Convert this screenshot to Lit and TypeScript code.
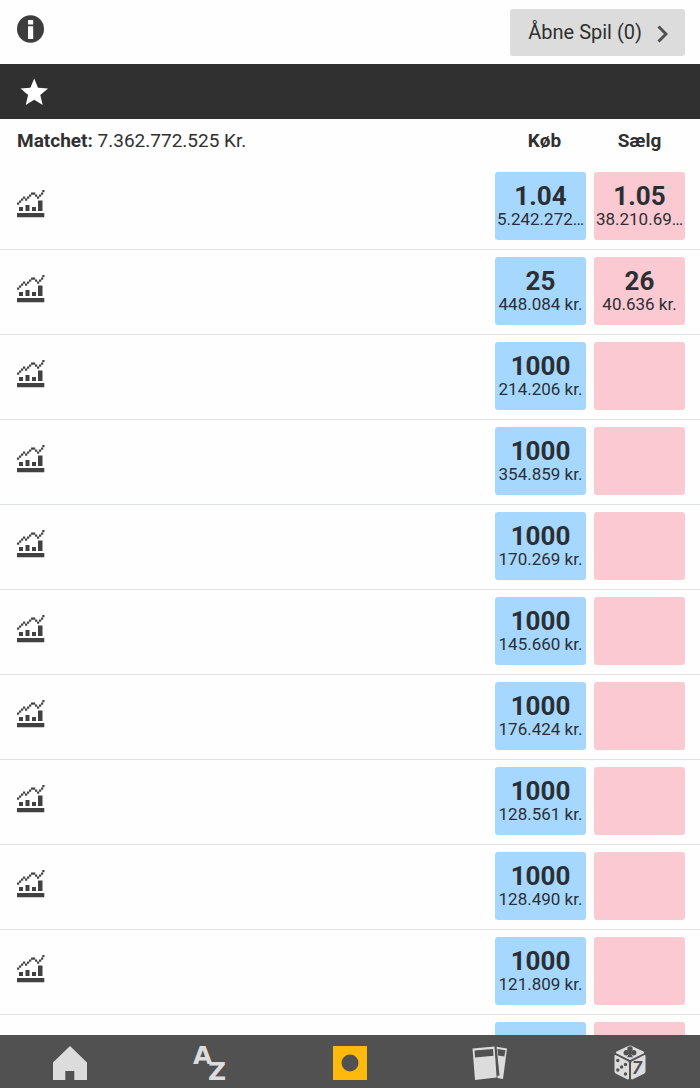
import { LitElement, html, css, svg, nothing } from "lit";
import { customElement, property } from "lit/decorators.js";

interface Offer {
  price: string;
  stake: string;
}

interface Runner {
  back: Offer;
  lay: Offer | null;
}

const only = (stake: string): Runner => ({ back: { price: "1000", stake }, lay: null });

const RUNNERS: Runner[] = [
  { back: { price: "1.04", stake: "5.242.272…" }, lay: { price: "1.05", stake: "38.210.69…" } },
  { back: { price: "25", stake: "448.084 kr." }, lay: { price: "26", stake: "40.636 kr." } },
  only("214.206 kr."),
  only("354.859 kr."),
  only("170.269 kr."),
  only("145.660 kr."),
  only("176.424 kr."),
  only("128.561 kr."),
  only("128.490 kr."),
  only("121.809 kr."),
  { back: { price: "", stake: "" }, lay: null },
];

const DOTS: [number, number][] = [
  [0, 13], [2, 11], [4, 9], [6, 7], [8, 9], [10, 7], [12, 5], [14, 3], [16, 3], [18, 5], [20, 7], [22, 5], [24, 3], [25.3, 0.5],
];

@customElement("odds-button")
export class OddsButton extends LitElement {
  @property() kind: "back" | "lay" = "back";
  @property({ attribute: false }) offer: Offer | null = null;

  static styles = css`
    :host { display: block; min-width: 0; }
    button {
      display: flex;
      flex-direction: column;
      align-items: center;
      width: 100%;
      height: 68px;
      padding: 9px 0 0;
      border: 0;
      border-radius: 3px;
      font-family: Roboto, sans-serif;
      color: #2b2f33;
      cursor: pointer;
    }
    .back { background: #a6d8ff; }
    .lay { background: #fac9d1; }
    .price { font-size: 26px; line-height: 30px; font-weight: 700; }
    .stake { font-size: 17px; line-height: 16px; white-space: nowrap; }
  `;

  render() {
    return html`<button class=${this.kind} aria-label=${this.offer?.price ? nothing : this.kind === "back" ? "Køb" : "Sælg"}>
      ${this.offer
        ? html`<span class="price">${this.offer.price}</span><span class="stake">${this.offer.stake}</span>`
        : nothing}
    </button>`;
  }
}

@customElement("app-root")
export class AppRoot extends LitElement {
  static styles = css`
    :host {
      display: flex;
      flex-direction: column;
      height: 100vh;
      background: #fefefe;
      color: #303030;
      font-family: Roboto, sans-serif;
    }
    * { box-sizing: border-box; }
    svg { display: block; }
    button { border: 0; padding: 0; background: none; font: inherit; color: inherit; cursor: pointer; }
    .top {
      display: flex;
      align-items: center;
      justify-content: space-between;
      flex: none;
      height: 64px;
      padding: 0 15px 0 17px;
    }
    .info { padding-bottom: 6px; }
    .top .open {
      display: flex;
      align-items: center;
      gap: 15px;
      height: 47px;
      padding: 0 17px 0 18px;
      border-radius: 3px;
      background: #dcdcdc;
      font-size: 20px;
      line-height: 24px;
    }
    .open svg { margin-top: 4px; }
    .favourite {
      display: flex;
      align-items: center;
      flex: none;
      height: 55px;
      padding-left: 20px;
      background: #303030;
      color: #fff;
    }
    main { flex: 1; min-height: 0; overflow-y: auto; scrollbar-width: none; }
    .grid {
      display: grid;
      grid-template-columns: 1fr 91px 91px;
      column-gap: 8px;
      padding: 0 15px 0 17px;
    }
    .grid.heading { height: 46px; padding-bottom: 2px; align-items: center; font-size: 19px; line-height: 22px; }
    .heading b { font-weight: 700; }
    .heading .col { text-align: center; font-weight: 700; }
    .heading .back-col { padding-left: 8px; }
    .grid.runner { height: 85px; padding-top: 7px; border-bottom: 1px solid #dfe3e3; align-items: start; }
    .runner .stats { justify-self: start; padding-top: 17px; color: #414141; }
    nav {
      display: grid;
      grid-template-columns: repeat(5, 1fr);
      flex: none;
      height: 53px;
      background: #515151;
      color: #dcdcdc;
    }
    nav a { display: flex; align-items: center; justify-content: center; color: inherit; text-decoration: none; padding-top: 2px; }
    .az { font: 700 25px "DejaVu Sans", sans-serif; }
    .seven { font: italic 700 18px Roboto, sans-serif; }
  `;

  private chart() {
    return html`<svg width="28" height="29" viewBox="0 0 28 29" fill="currentColor" aria-hidden="true">
      ${DOTS.map(([x, y]) => svg`<rect x=${x} y=${y + 0.5} width="2.2" height="2.2" />`)}
      <path d="M2 18h4v4H2zM8.500 16h4v6h-4zM15 18h4v4h-4zM21 11.500h4.500V22H21zM0 24h27.300v4.200H0z" />
    </svg>`;
  }

  private row(r: Runner) {
    return html`<div class="grid runner">
      <button class="stats" aria-label="Statistik">${this.chart()}</button>
      <odds-button kind="back" .offer=${r.back}></odds-button>
      <odds-button kind="lay" .offer=${r.lay}></odds-button>
    </div>`;
  }

  render() {
    return html`
      <header class="top">
        <button class="info" aria-label="Information">
          <svg width="27" height="28" viewBox="0 0 27 28">
            <ellipse cx="13.500" cy="14" rx="13.500" ry="13.800" fill="#3d3d3d" />
            <path d="M11 5h5.200v4.500H11zM11 11.300h5.200V24H11z" fill="#fff" />
          </svg>
        </button>
        <button class="open">
          <span>Åbne Spil (0)</span>
          <svg width="11" height="18" viewBox="0 0 11 18" fill="none" stroke="#505050" stroke-width="3">
            <path d="M1.500 1.500 9 9 1.500 16.500" />
          </svg>
        </button>
      </header>
      <div class="favourite">
        <button aria-label="Favorit">
          <svg width="28" height="28" viewBox="0 0 28 28" fill="currentColor">
            <path d="M14.200 0.500 18 9.800 28 10.600 20.300 17 22.700 27 14.200 21.700 5.700 27 8.100 17 0.500 10.600 10.400 9.800z" />
          </svg>
        </button>
      </div>
      <main>
        <div class="grid heading">
          <span><b>Matchet:</b> 7.362.772.525 Kr.</span>
          <span class="col back-col">Køb</span>
          <span class="col">Sælg</span>
        </div>
        ${RUNNERS.map((r) => this.row(r))}
      </main>
      <nav aria-label="Hovedmenu">
        <a href="#hjem" aria-label="Hjem">
          <svg width="34" height="34" viewBox="0 0 34 34" fill="currentColor">
            <path d="M17 0 34 16.500V34H21.300V25h-9v9H0V16.500z" />
          </svg>
        </a>
        <a href="#sport" aria-label="A til Z">
          <svg class="az" width="42" height="49" viewBox="0 0 42 49" fill="currentColor">
            <text x="4" y="26">A</text>
            <text x="19" y="42">Z</text>
          </svg>
        </a>
        <a href="#exchange" aria-label="Exchange">
          <svg width="34" height="34" viewBox="0 0 34 34">
            <path d="M0 0h34v34H0z" fill="#ffb80c" />
            <circle cx="17" cy="17" r="8.500" fill="#515151" />
          </svg>
        </a>
        <a href="#kasino" aria-label="Kasino">
          <svg width="36" height="34" viewBox="0 0 36 34" fill="currentColor">
            <path d="M23 0.500 35 2.500 31 33 25.500 32z" />
            <path d="M25.500 3 33.500 4.300 32.300 10.500 26 9.500z" fill="#515151" />
            <path d="M22 0 24.500 0 27.500 29.500 24 30z" fill="#515151" />
            <path d="M0.500 2.500 22.500 0.500 24.600 31.500 3 34z" />
            <path d="M2.500 4.600 21 3 21.500 9.800 3 11.500z" fill="#515151" />
          </svg>
        </a>
        <a href="#spil" aria-label="Spil">
          <svg width="32" height="35" viewBox="0 0 32 35" fill="currentColor">
            <path d="M14.800 0.700q1.200-.6 2.400 0L29.500 6.500q1.500 1 0 2L17.200 14.600q-1.200.6-2.400 0L2.500 8.500q-1.500-1 0-2z" />
            <path d="M2 10.200 13.500 16q1.500.7 1.500 2.300V33q0 2-1.800 1.200L2 28.700q-1.500-.8-1.500-2.400V11q0-1.500 1.500-.8z" />
            <path d="M30 10.200 18.500 16q-1.500.7-1.500 2.300V33q0 2 1.800 1.200L30 28.700q1.500-.8 1.500-2.400V11q0-1.500-1.500-.8z" />
            <g fill="#515151">
              <circle cx="16" cy="4" r="2.700" />
              <circle cx="12.300" cy="7.800" r="2.700" />
              <circle cx="19.700" cy="7.800" r="2.700" />
              <path d="M15 5h2l.3 4.500 1.700 2.700h-6l1.700-2.700z" />
              <circle cx="3.800" cy="15.500" r="1.700" />
              <circle cx="11.500" cy="19.500" r="1.700" />
              <circle cx="7.600" cy="22" r="1.700" />
              <circle cx="3.800" cy="25" r="1.700" />
              <circle cx="11.500" cy="29" r="1.700" />
              <text class="seven" x="18" y="29">7</text>
            </g>
          </svg>
        </a>
      </nav>
    `;
  }
}
